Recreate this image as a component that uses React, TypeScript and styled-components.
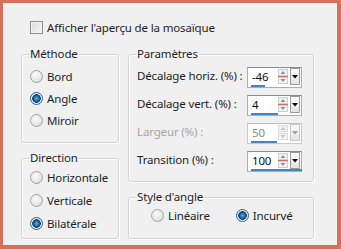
import React from 'react';
import styled, { createGlobalStyle } from 'styled-components';

const GlobalStyle = createGlobalStyle`
  html, body {
    margin: 0;
    padding: 0;
    background: #d4705c;
  }
  body {
    font-family: 'Noto Sans', 'DejaVu Sans', sans-serif;
    font-size: 11.5px;
    letter-spacing: -0.15px;
    color: #1e1e1e;
    white-space: nowrap;
  }
`;

interface ISpin {
  label: string;
  value: number;
  min: number;
  max: number;
  disabled?: boolean;
}

const spins: ISpin[] = [
  { label: 'Décalage horiz. (%) :', value: -46, min: -100, max: 100 },
  { label: 'Décalage vert. (%) :', value: 4, min: -100, max: 100 },
  { label: 'Largeur (%) :', value: 50, min: 0, max: 100, disabled: true },
  { label: 'Transition (%) :', value: 100, min: 0, max: 100 },
];

const Frame = styled.div`
  box-sizing: border-box;
  width: 341px;
  height: 249px;
  border-style: solid;
  border-color: #d4705c;
  border-width: 3px 4px 4px 3px;
  background: #f0f0f0;
  padding: 15px 0 0 18px;
`;

const CheckRow = styled.label`
  display: flex;
  align-items: center;
  height: 18px;
  padding-left: 9px;
  gap: 4px;
`;

const CheckBox = styled.span`
  box-sizing: border-box;
  width: 13px;
  height: 13px;
  border: 1px solid #8e8f8f;
  background: linear-gradient(135deg, #dcdcdc, #f6f6f6);
  box-shadow: inset 0 0 0 1px #f4f4f4;
`;

const Columns = styled.div`
  display: grid;
  grid-template-columns: 98px 186px;
  column-gap: 9px;
  margin-top: 11px;
`;

const Column = styled.div`
  display: flex;
  flex-direction: column;
  gap: 8px;
`;

const Group = styled.fieldset<{ $h: number; $pt: number }>`
  box-sizing: border-box;
  margin: 0;
  height: ${p => p.$h}px;
  padding: ${p => p.$pt}px 0 0 8px;
  border: 1px solid #d5d5d5;
  border-radius: 3px;
  box-shadow: inset 1px 1px 0 #fff, 1px 1px 0 #fff;
  min-width: 0;
`;

const Legend = styled.legend`
  padding: 0 1px;
  margin-left: -1px;
  line-height: 14px;
  height: 14px;
`;

const RadioRow = styled.label<{ $h?: number }>`
  display: flex;
  align-items: center;
  gap: 4px;
  height: ${p => p.$h ?? 23}px;
`;

const Radio = styled.span<{ $on?: boolean }>`
  box-sizing: border-box;
  width: 13px;
  height: 13px;
  border-radius: 50%;
  border: 1px solid ${p => (p.$on ? '#2c628b' : '#a3a3a3')};
  background: ${p =>
    p.$on
      ? 'radial-gradient(circle at 50% 50%, #5fb3e6 0, #1e6aa2 2.5px, #0f3d63 4px, #e8f2f8 4.6px, #dfe9f0 100%)'
      : 'radial-gradient(circle at 40% 35%, #fbfbfb 0, #e6e6e6 60%, #cfcfcf 100%)'};
`;

const Inline = styled.div`
  display: flex;
  gap: 26px;
  padding-left: 14px;
`;

const SpinRow = styled.div<{ $dim?: boolean }>`
  display: flex;
  align-items: center;
  justify-content: space-between;
  height: 28px;
  padding-right: 11px;
  color: ${p => (p.$dim ? '#a6a6a6' : 'inherit')};
`;

const SpinLabel = styled.span`
  padding-bottom: 4px;
`;

const Field = styled.div<{ $dim?: boolean }>`
  position: relative;
  box-sizing: border-box;
  width: 55px;
  height: 21px;
  border: 1px solid ${p => (p.$dim ? '#c9c9c9' : '#abadb3')};
  border-top-color: ${p => (p.$dim ? '#bdbdbd' : '#8a8c91')};
  background: #fff;
  display: flex;
  align-items: center;
  padding: 0 1px 1px 4px;
  color: ${p => (p.$dim ? '#8a8a8a' : '#111')};
`;

const FieldText = styled.span`
  flex: 1;
`;

const Bar = styled.div`
  position: absolute;
  left: 3px;
  bottom: 0;
  height: 2px;
  background: #3f86cc;
`;

const DropButton = styled.div<{ $dim?: boolean }>`
  box-sizing: border-box;
  width: 10px;
  height: 17px;
  margin-left: 2px;
  border: 1px solid ${p => (p.$dim ? '#c8c8c8' : '#9a9a9a')};
  background: linear-gradient(#fbfbfb, #e4e4e4);
  display: flex;
  align-items: center;
  justify-content: center;
`;

function Spinner({ dim }: { dim?: boolean }) {
  const arrow = dim ? '#c4c4c4' : '#7d97b3';
  return (
    <svg width='10' height='15' viewBox='0 0 10 15'>
      <rect x='0.5' y='0.5' width='9' height='6' fill='#f3f3f3' stroke={dim ? '#dadada' : '#c9cfd6'} />
      <rect x='0.5' y='8.5' width='9' height='6' fill='#f3f3f3' stroke={dim ? '#dadada' : '#c9cfd6'} />
      <path d='M2.5 5 L5 2 L7.5 5 Z' fill={arrow} />
      <path d='M2.5 10 L5 13 L7.5 10 Z' fill={arrow} />
      {!dim && <line x1='0' y1='7.5' x2='10' y2='7.5' stroke='#c8776f' strokeWidth='1' />}
    </svg>
  );
}

function SpinField({ s }: { s: ISpin }) {
  const frac = (s.value - s.min) / (s.max - s.min);
  return (
    <SpinRow $dim={s.disabled}>
      <SpinLabel>{s.label}</SpinLabel>
      <Field $dim={s.disabled}>
        <FieldText>{s.value}</FieldText>
        <Spinner dim={s.disabled} />
        <DropButton $dim={s.disabled}>
          <svg width='6' height='4' viewBox='0 0 6 4'>
            <path d='M0 0 H6 L3 3.5 Z' fill={s.disabled ? '#a0a0a0' : '#000'} />
          </svg>
        </DropButton>
        <Bar style={{ width: `${Math.round(frac * 51)}px` }} />
      </Field>
    </SpinRow>
  );
}

export default function App() {
  return (
    <>
      <GlobalStyle />
      <Frame>
        <CheckRow>
          <CheckBox />
          <span>Afficher l'aperçu de la mosaïque</span>
        </CheckRow>
        <Columns>
          <Column>
            <Group $h={96} $pt={4}>
              <Legend>Méthode</Legend>
              <RadioRow $h={22}><Radio />Bord</RadioRow>
              <RadioRow $h={22}><Radio $on />Angle</RadioRow>
              <RadioRow $h={22}><Radio />Miroir</RadioRow>
            </Group>
            <Group $h={88} $pt={1}>
              <Legend>Direction</Legend>
              <RadioRow><Radio />Horizontale</RadioRow>
              <RadioRow><Radio />Verticale</RadioRow>
              <RadioRow><Radio $on />Bilatérale</RadioRow>
            </Group>
          </Column>
          <Column>
            <Group $h={135} $pt={2}>
              <Legend>Paramètres</Legend>
              {spins.map(s => (
                <SpinField key={s.label} s={s} />
              ))}
            </Group>
            <Group $h={49} $pt={0}>
              <Legend>Style d'angle</Legend>
              <Inline>
                <RadioRow><Radio />Linéaire</RadioRow>
                <RadioRow><Radio $on />Incurvé</RadioRow>
              </Inline>
            </Group>
          </Column>
        </Columns>
      </Frame>
    </>
  );
}
